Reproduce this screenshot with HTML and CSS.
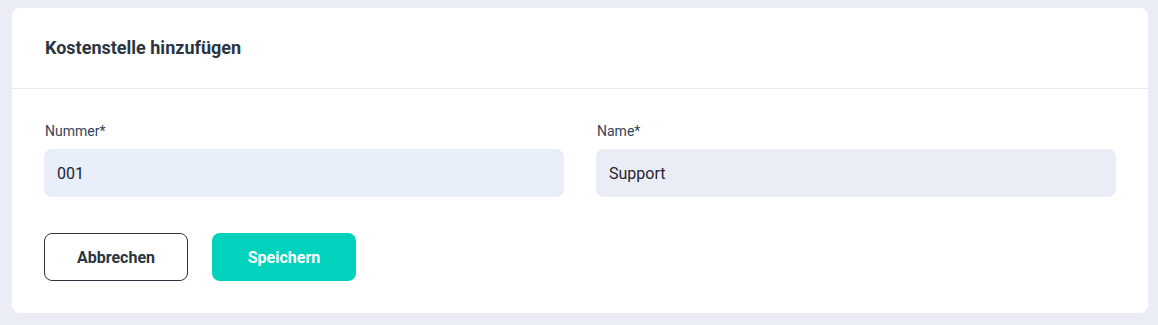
FILE: index.html
```html
<!DOCTYPE html>
<html lang="de">
<head>
<meta charset="utf-8">
<link rel="stylesheet" href="styles.css">
</head>
<body>
<div class="card">
  <div class="card-header">
    <h2 class="title">Kostenstelle hinzufügen</h2>
  </div>
  <div class="card-body">
    <div class="fields">
      <label class="field">
        <span class="label">Nummer*</span>
        <input class="input input-active" type="text" value="001">
      </label>
      <label class="field">
        <span class="label">Name*</span>
        <input class="input" type="text" value="Support">
      </label>
    </div>
    <div class="actions">
      <button class="btn btn-outline" type="button">Abbrechen</button>
      <button class="btn btn-primary" type="button">Speichern</button>
    </div>
  </div>
</div>
</body>
</html>
```

FILE: styles.css
```css
html, body {
  margin: 0;
  padding: 0;
}
body {
  background: #eaedf5;
  font-family: Roboto, "Liberation Sans", sans-serif;
  padding: 8px 10px 12px 12px;
}
.card {
  background: #ffffff;
  border-radius: 8px;
  width: 1136px;
  height: 305px;
  box-sizing: border-box;
}
.card-header {
  height: 81px;
  box-sizing: border-box;
  border-bottom: 1px solid #e8eaf0;
  display: flex;
  align-items: center;
  padding: 0 32px 0 33px;
}
.title {
  margin: 0;
  font-size: 18px;
  font-weight: 700;
  color: #2b3441;
  line-height: 22px;
  padding-top: 0;
}
.card-body {
  padding: 32px 32px 0 32px;
}
.fields {
  display: grid;
  grid-template-columns: 1fr 1fr;
  gap: 32px;
}
.field {
  display: flex;
  flex-direction: column;
}
.label {
  font-size: 14px;
  line-height: 20px;
  color: #34435a;
  margin-bottom: 8px;
  padding-left: 1px;
}
.input {
  height: 48px;
  box-sizing: border-box;
  border: none;
  border-radius: 8px;
  background: #eaedf5;
  padding: 0 13px;
  font-family: Roboto, "Liberation Sans", sans-serif;
  font-size: 16px;
  color: #1f2430;
  outline: none;
}
.input-active {
  background: #e8eefa;
}
.actions {
  display: flex;
  gap: 24px;
  margin-top: 36px;
}
.btn {
  width: 144px;
  height: 48px;
  box-sizing: border-box;
  border-radius: 8px;
  font-family: Roboto, "Liberation Sans", sans-serif;
  font-size: 16px;
  font-weight: 700;
  cursor: pointer;
}
.btn-outline {
  background: #ffffff;
  border: 1px solid #2b3441;
  color: #2b3441;
}
.btn-primary {
  background: #00d2bd;
  border: none;
  color: #ffffff;
}
```
